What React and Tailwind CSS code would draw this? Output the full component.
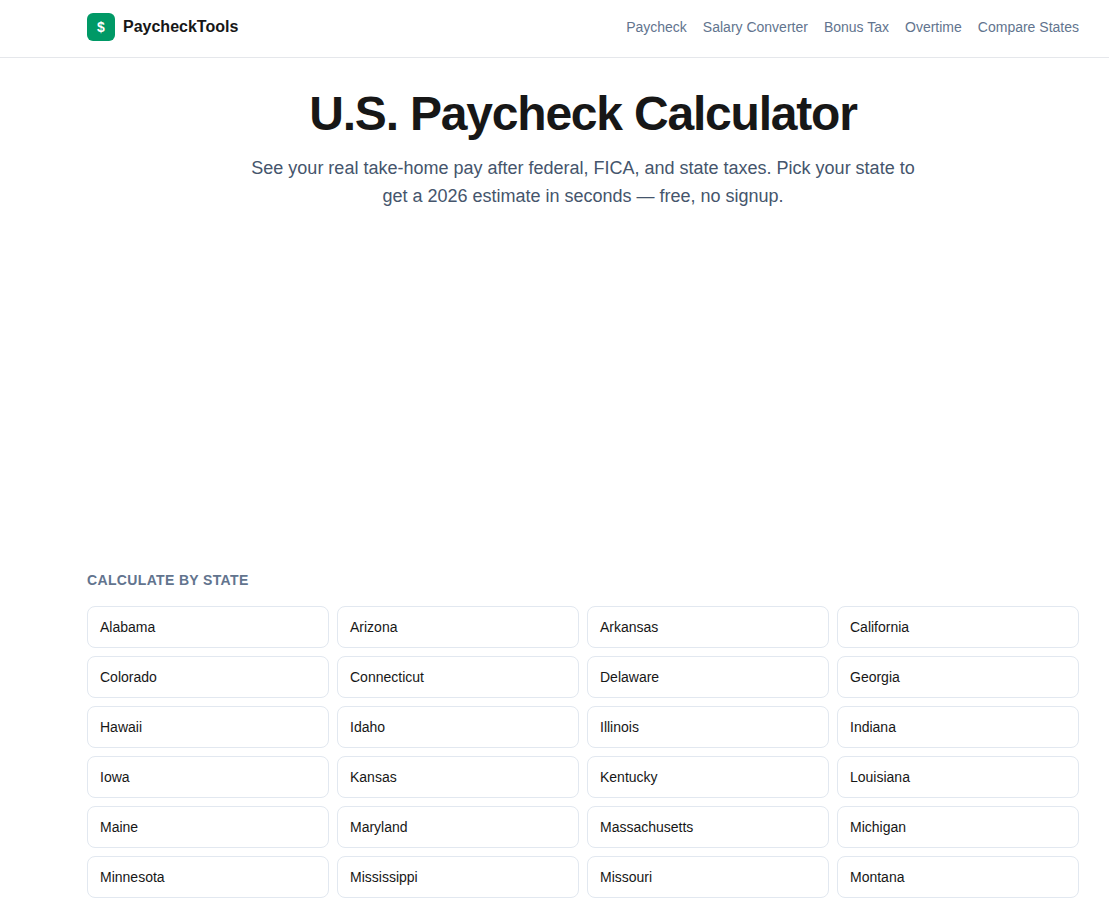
const navLinks = [
    { label: 'Paycheck', href: '#paycheck' },
    { label: 'Salary Converter', href: '#salary-converter' },
    { label: 'Bonus Tax', href: '#bonus-tax' },
    { label: 'Overtime', href: '#overtime' },
    { label: 'Compare States', href: '#compare-states' },
];

const states = [
    'Alabama', 'Arizona', 'Arkansas', 'California',
    'Colorado', 'Connecticut', 'Delaware', 'Georgia',
    'Hawaii', 'Idaho', 'Illinois', 'Indiana',
    'Iowa', 'Kansas', 'Kentucky', 'Louisiana',
    'Maine', 'Maryland', 'Massachusetts', 'Michigan',
    'Minnesota', 'Mississippi', 'Missouri', 'Montana',
];

const Header = () => (
    <header className="border-b border-gray-200">
        <div className="flex items-center justify-between pt-[13px] pb-4 pl-[87px] pr-[30px]">
            <a href="#home" className="flex items-center gap-2 font-bold">
                <span className="flex h-7 w-7 items-center justify-center rounded-md bg-[#009966] text-sm text-white">$</span>
                <span>PaycheckTools</span>
            </a>
            <nav className="flex items-center gap-4 text-sm text-slate-500">
                {navLinks.map((link) => (
                    <a key={link.href} href={link.href} className="hover:text-slate-900">
                        {link.label}
                    </a>
                ))}
            </nav>
        </div>
    </header>
);

const App = () => {
    return (
        <div className="bg-white font-['Liberation_Sans',Arial,sans-serif] text-[#171717]">
            <Header />
            <main className="pt-8 pb-1 pl-[87px] pr-[30px]">
                {/* Hero */}
                <section className="text-center">
                    <h1 className="text-5xl leading-none font-bold tracking-tight">U.S. Paycheck Calculator</h1>
                    <p className="mx-auto mt-4 max-w-2xl text-lg leading-7 text-slate-600">
                        See your real take-home pay after federal, FICA, and state taxes. Pick your state to
                        get a 2026 estimate in seconds — free, no signup.
                    </p>
                </section>

                {/* State list */}
                <section className="mt-[360px]">
                    <h2 className="text-sm font-semibold tracking-wide text-slate-500 uppercase">Calculate by state</h2>
                    <ul className="mt-4 grid grid-cols-4 gap-2">
                        {states.map((state) => (
                            <li key={state}>
                                <a
                                    href={`#${state.toLowerCase()}`}
                                    className="block rounded-lg border border-slate-200 px-3 py-[10px] text-sm hover:border-slate-400"
                                >
                                    {state}
                                </a>
                            </li>
                        ))}
                    </ul>
                </section>
            </main>
        </div>
    );
};

export default App;
